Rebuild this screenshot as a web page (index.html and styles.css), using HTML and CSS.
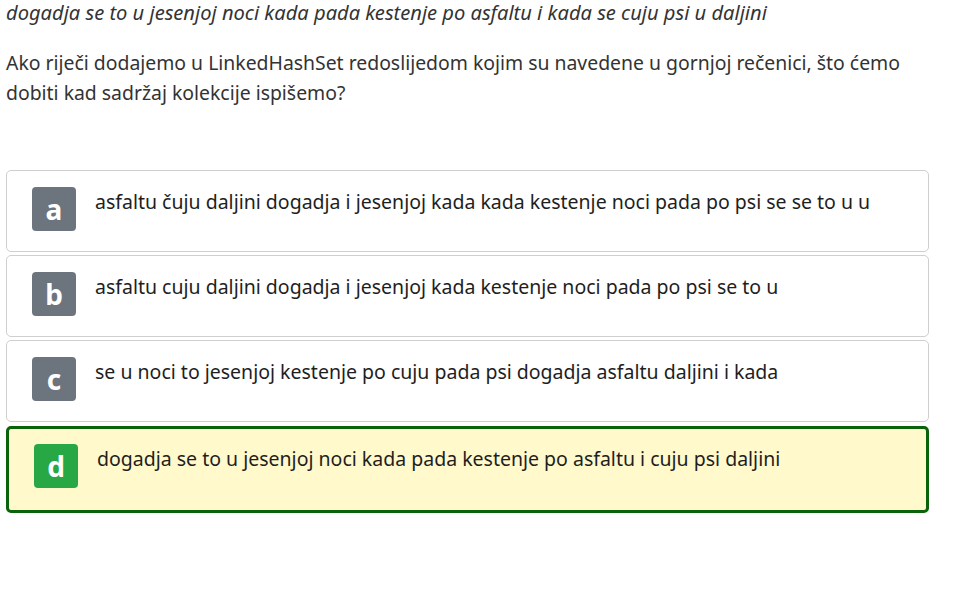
FILE: index.html
```html
<!DOCTYPE html>
<html>
<head>
<meta charset="utf-8">
<link rel="stylesheet" href="styles.css">
</head>
<body>
<div class="page">
  <p class="quote">dogadja se to u jesenjoj noci kada pada kestenje po asfaltu i kada se cuju psi u daljini</p>
  <p class="question">Ako riječi dodajemo u LinkedHashSet redoslijedom kojim su navedene u gornjoj rečenici, što ćemo dobiti kad sadržaj kolekcije ispišemo?</p>
  <div class="answers">
    <div class="answer">
      <span class="badge">a</span>
      <span class="text">asfaltu čuju daljini dogadja i jesenjoj kada kada kestenje noci pada po psi se se to u u</span>
    </div>
    <div class="answer">
      <span class="badge">b</span>
      <span class="text">asfaltu cuju daljini dogadja i jesenjoj kada kestenje noci pada po psi se to u</span>
    </div>
    <div class="answer">
      <span class="badge">c</span>
      <span class="text">se u noci to jesenjoj kestenje po cuju pada psi dogadja asfaltu daljini i kada</span>
    </div>
    <div class="answer correct">
      <span class="badge">d</span>
      <span class="text">dogadja se to u jesenjoj noci kada pada kestenje po asfaltu i cuju psi daljini</span>
    </div>
  </div>
</div>
</body>
</html>
```

FILE: styles.css
```css
html, body {
  margin: 0;
  padding: 0;
  background: #fff;
}
.page {
  width: 923px;
  padding: 0 6px;
  font-family: "Noto Sans", "Open Sans", sans-serif;
  font-size: 19.5px;
  line-height: 30px;
  color: #333;
}
.quote {
  margin: -2px 0 0 0;
  font-style: italic;
  font-size: 20.1px;
}
.question {
  margin: 20px 0 0 0;
  font-size: 19.4px;
}
.answers {
  margin-top: 62px;
  display: flex;
  flex-direction: column;
  gap: 3px;
}
.answer {
  display: flex;
  align-items: flex-start;
  gap: 19px;
  border: 1px solid #cfcfcf;
  border-radius: 5px;
  padding: 16px 0 20px 25px;
  color: #1e1e1e;
}
.answer.correct {
  border: 3px solid #0a620a;
  background: #fff9cc;
  padding: 15px 0 22px 25px;
  margin-top: 1px;
}
.badge {
  flex: none;
  width: 44px;
  height: 44px;
  border-radius: 4px;
  background: #6c757d;
  color: #fff;
  font-weight: 700;
  font-size: 28px;
  line-height: 44px;
  text-align: center;
}
.correct .badge {
  background: #28a745;
}
.text {
  line-height: 30px;
}
```
